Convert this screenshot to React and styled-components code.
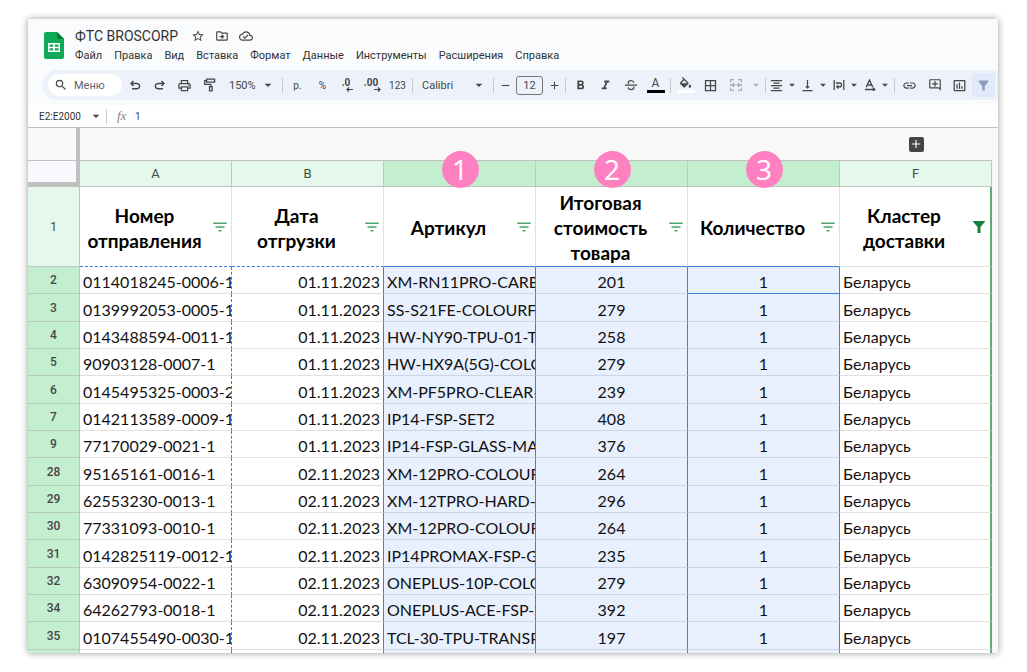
import { useState } from 'react';
import styled, { createGlobalStyle, css } from 'styled-components';
import {
  MdAdd,
  MdArrowDropDown,
  MdBorderAll,
  MdFilterAlt,
  MdFilterList,
  MdFormatAlignCenter,
  MdFormatBold,
  MdFormatItalic,
  MdInsertChartOutlined,
  MdLink,
  MdOutlineAddComment,
  MdOutlineCloudDone,
  MdOutlineDriveFileMove,
  MdOutlinePrint,
  MdRemove,
  MdSearch,
  MdStarBorder,
  MdVerticalAlignBottom,
} from 'react-icons/md';

const menus = ['Файл', 'Правка', 'Вид', 'Вставка', 'Формат', 'Данные', 'Инструменты', 'Расширения', 'Справка'];

const columns = [
  { letter: 'A', title: 'Номер отправления' },
  { letter: 'B', title: 'Дата отгрузки' },
  { letter: 'C', title: 'Артикул', badge: 1 },
  { letter: 'D', title: 'Итоговая стоимость товара', badge: 2 },
  { letter: 'E', title: 'Количество', badge: 3 },
  { letter: 'F', title: 'Кластер доставки', filtered: true },
];

const rows = [
  [2, '0114018245-0006-1', '01.11.2023', 'XM-RN11PRO-CARB', 201],
  [3, '0139992053-0005-1', '01.11.2023', 'SS-S21FE-COLOURFU', 279],
  [4, '0143488594-0011-1', '01.11.2023', 'HW-NY90-TPU-01-TR', 258],
  [5, '90903128-0007-1', '01.11.2023', 'HW-HX9A(5G)-COLO', 279],
  [6, '0145495325-0003-2', '01.11.2023', 'XM-PF5PRO-CLEAR-C', 239],
  [7, '0142113589-0009-1', '01.11.2023', 'IP14-FSP-SET2', 408],
  [9, '77170029-0021-1', '01.11.2023', 'IP14-FSP-GLASS-MAT', 376],
  [28, '95165161-0016-1', '02.11.2023', 'XM-12PRO-COLOUR', 264],
  [29, '62553230-0013-1', '02.11.2023', 'XM-12TPRO-HARD-T', 296],
  [30, '77331093-0010-1', '02.11.2023', 'XM-12PRO-COLOUR', 264],
  [31, '0142825119-0012-1', '02.11.2023', 'IP14PROMAX-FSP-GL', 235],
  [32, '63090954-0022-1', '02.11.2023', 'ONEPLUS-10P-COLO', 279],
  [34, '64262793-0018-1', '02.11.2023', 'ONEPLUS-ACE-FSP-S', 392],
  [35, '0107455490-0030-1', '02.11.2023', 'TCL-30-TPU-TRANSP', 197],
];

const SheetsLogo = () => (
  <svg width="20" height="27" viewBox="0 0 20 27" aria-hidden="true">
    <path d="M2 0h11l7 7v18a2 2 0 0 1-2 2H2a2 2 0 0 1-2-2V2a2 2 0 0 1 2-2z" fill="#0fa958" />
    <path d="M13 0l7 7h-5a2 2 0 0 1-2-2z" fill="#087a3c" />
    <path d="M4 11h12v9H4zM5.5 12.5v2.2h3.7v-2.2zm5.3 0v2.2h3.7v-2.2zm-5.3 3.8v2.2h3.7v-2.2zm5.3 0v2.2h3.7v-2.2z" fill="#fff" fillRule="evenodd" />
  </svg>
);

const UndoIcon = ({ flip }) => (
  <svg width="14" height="14" viewBox="0 0 14 14" fill="none" stroke="currentColor" strokeWidth="1.4" aria-hidden="true">
    <g transform={flip ? 'matrix(-1 0 0 1 14 0)' : undefined}>
      <path d="M5.500 3L3 5.500 5.500 8M3.200 5.500h5.800a2.600 2.600 0 0 1 0 5.200H4" />
    </g>
  </svg>
);

const PaintIcon = () => (
  <svg width="14" height="14" viewBox="0 0 14 14" fill="none" stroke="currentColor" strokeWidth="1.3" aria-hidden="true">
    <path d="M3.600 1.200h8v3h-8zM3.600 2.700H1.700v3.700h6.100v2M6.500 8.600h2.600v4.200H6.500z" />
  </svg>
);

const DecimalIcon = ({ more }) => (
  <DecimalGlyph>
    <span>{more ? '.00' : '.0'}</span>
    <svg width="7" height="5" viewBox="0 0 7 5" fill="none" stroke="currentColor" strokeWidth="1.2" aria-hidden="true">
      <path d={more ? 'M0 2.500h6M4 .5l2 2-2 2' : 'M7 2.500H1M3 .5l-2 2 2 2'} />
    </svg>
  </DecimalGlyph>
);

const StrikeIcon = () => (
  <svg width="14" height="14" viewBox="0 0 14 14" fill="none" stroke="currentColor" strokeWidth="1.3" aria-hidden="true">
    <path d="M1 7.200h12M9.800 4.600C9.500 3.300 8.400 2.600 7 2.600S4.300 3.400 4.300 4.600c0 .5.200.9.500 1.200M4.200 9.400c.2 1.400 1.300 2.200 2.800 2.200s2.900-.8 2.900-2.100c0-.4-.1-.7-.2-1" />
  </svg>
);

const FillIcon = () => (
  <svg width="15" height="15" viewBox="0 0 24 24" fill="currentColor" aria-hidden="true">
    <path d="M16.560 8.940L7.620 0 6.210 1.410l2.380 2.380-5.150 5.150a1.490 1.490 0 0 0 0 2.120l5.500 5.500c.29.29.68.44 1.060.44s.77-.15 1.060-.44l5.500-5.500c.59-.58.59-1.530 0-2.120zM5.210 10L10 5.210 14.790 10zM19 11.500s-2 2.170-2 3.500a2 2 0 0 0 4 0c0-1.330-2-3.500-2-3.500z" />
  </svg>
);

const MergeIcon = () => (
  <svg width="14" height="14" viewBox="0 0 14 14" fill="none" stroke="currentColor" strokeWidth="1.3" aria-hidden="true">
    <path d="M5 1.600H1.600V4.500M9 1.600h3.400V4.500M5 12.400H1.600V9.500M9 12.400h3.400V9.500M1 7h4.500M3.800 5.200L5.600 7 3.800 8.800M13 7H8.500M10.200 5.200L8.400 7l1.800 1.800" />
  </svg>
);

const WrapIcon = () => (
  <svg width="12" height="12" viewBox="0 0 12 12" fill="none" stroke="currentColor" strokeWidth="1.3" aria-hidden="true">
    <path d="M1.200 1v10M10.800 1v10M2.800 4h3.800a1.900 1.900 0 0 1 0 3.800H4M5.500 6.100L3.800 7.800l1.700 1.700" />
  </svg>
);

const RotateIcon = () => (
  <svg width="12" height="12" viewBox="0 0 12 12" fill="none" stroke="currentColor" strokeWidth="1.3" aria-hidden="true">
    <path d="M2.200 8.200L5.500 1l3.300 7.200M3.300 6h4.400M1 10.500h9.500M9 8.700l1.800 1.800L9 12" />
  </svg>
);

const FunnelIcon = () => (
  <svg width="14" height="14" viewBox="0 0 14 14" fill="#188038" aria-hidden="true">
    <path d="M.5 1h13L8.500 7v6h-3V7z" />
  </svg>
);

const Dropdown = ({ label, children }) => (
  <SplitButton type="button" aria-label={label}>
    <IconSlot>{children}</IconSlot>
    <MdArrowDropDown size={14} />
  </SplitButton>
);

export default function App() {
  const [zoom, setZoom] = useState('150%');
  const [font, setFont] = useState('Calibri');
  const [fontSize, setFontSize] = useState('12');
  const [range, setRange] = useState('E2:E2000');
  const [formula, setFormula] = useState('1');

  return (
    <>
      <GlobalStyle />
      <Page>
        <Window>
          <Header>
            <SheetsLogo />
            <div>
              <TitleRow>
                <Title>ФТС BROSCORP</Title>
                <TitleButton type="button" aria-label="Пометить"><MdStarBorder size={14} /></TitleButton>
                <TitleButton type="button" aria-label="Переместить"><MdOutlineDriveFileMove size={14} /></TitleButton>
                <TitleButton type="button" aria-label="Статус документа"><MdOutlineCloudDone size={14} /></TitleButton>
              </TitleRow>
              <MenuBar>
                {menus.map((menu) => (
                  <MenuButton key={menu} type="button">{menu}</MenuButton>
                ))}
              </MenuBar>
            </div>
          </Header>

          <Toolbar>
            <SearchBox>
              <MdSearch size={14} />
              <SearchInput type="text" placeholder="Меню" aria-label="Поиск по меню" />
            </SearchBox>
            <Tool type="button" aria-label="Отменить"><UndoIcon /></Tool>
            <Tool type="button" aria-label="Повторить"><UndoIcon flip /></Tool>
            <Tool type="button" aria-label="Печать"><MdOutlinePrint size={15} /></Tool>
            <Tool type="button" aria-label="Копировать форматирование"><PaintIcon /></Tool>
            <SelectBox $width={58}>
              <Select aria-label="Масштаб" value={zoom} onChange={(e) => setZoom(e.target.value)}>
                <option>100%</option>
                <option>150%</option>
              </Select>
              <MdArrowDropDown size={16} />
            </SelectBox>
            <Separator />
            <Tool type="button" aria-label="Денежный формат">р.</Tool>
            <Tool type="button" aria-label="Процентный формат">%</Tool>
            <Tool type="button" aria-label="Меньше знаков"><DecimalIcon /></Tool>
            <Tool type="button" aria-label="Больше знаков"><DecimalIcon more /></Tool>
            <Tool type="button" aria-label="Другие форматы">123</Tool>
            <Separator />
            <SelectBox $width={76}>
              <Select aria-label="Шрифт" value={font} onChange={(e) => setFont(e.target.value)}>
                <option>Calibri</option>
                <option>Arial</option>
              </Select>
              <MdArrowDropDown size={16} />
            </SelectBox>
            <Separator />
            <Step type="button" aria-label="Уменьшить шрифт"><MdRemove size={13} /></Step>
            <SizeInput aria-label="Размер шрифта" value={fontSize} onChange={(e) => setFontSize(e.target.value)} />
            <Step type="button" aria-label="Увеличить шрифт"><MdAdd size={13} /></Step>
            <Separator />
            <Tool type="button" aria-label="Полужирный"><MdFormatBold size={15} /></Tool>
            <Tool type="button" aria-label="Курсив"><MdFormatItalic size={15} /></Tool>
            <Tool type="button" aria-label="Зачёркнутый"><StrikeIcon /></Tool>
            <Tool type="button" aria-label="Цвет текста"><ColorMark $color="#000">A</ColorMark></Tool>
            <Separator />
            <Tool type="button" aria-label="Цвет заливки">
              <ColorMark $color="#fff"><FillIcon /></ColorMark>
            </Tool>
            <Tool type="button" aria-label="Границы"><MdBorderAll size={15} /></Tool>
            <SplitButton type="button" aria-label="Объединить ячейки" disabled>
              <IconSlot><MergeIcon /></IconSlot>
              <MdArrowDropDown size={14} />
            </SplitButton>
            <Separator />
            <Dropdown label="Выравнивание по горизонтали"><MdFormatAlignCenter size={15} /></Dropdown>
            <Dropdown label="Выравнивание по вертикали"><MdVerticalAlignBottom size={15} /></Dropdown>
            <Dropdown label="Перенос текста"><WrapIcon /></Dropdown>
            <Dropdown label="Поворот текста"><RotateIcon /></Dropdown>
            <Separator />
            <Tool type="button" aria-label="Вставить ссылку"><MdLink size={15} /></Tool>
            <Tool type="button" aria-label="Добавить комментарий"><MdOutlineAddComment size={14} /></Tool>
            <Tool type="button" aria-label="Вставить диаграмму"><MdInsertChartOutlined size={15} /></Tool>
            <Tool type="button" aria-label="Фильтр" $active><MdFilterAlt size={15} /></Tool>
          </Toolbar>

          <FormulaBar>
            <NameInput aria-label="Диапазон" value={range} onChange={(e) => setRange(e.target.value)} />
            <MdArrowDropDown size={16} />
            <Separator />
            <Fx>fx</Fx>
            <FormulaInput aria-label="Формула" value={formula} onChange={(e) => setFormula(e.target.value)} />
          </FormulaBar>

          <Sheet>
            <Table>
              <colgroup>
                <NumberCol />
                {columns.map((col) => <col key={col.letter} />)}
              </colgroup>
              <thead>
                <tr>
                  <GroupCorner />
                  <GroupCell colSpan={5} />
                  <GroupCell>
                    <ExpandButton type="button" aria-label="Развернуть группу"><MdAdd size={14} /></ExpandButton>
                  </GroupCell>
                </tr>
                <tr>
                  <Corner />
                  {columns.map((col) => (
                    <Letter key={col.letter} scope="col" $selected={!!col.badge}>
                      {!col.badge && col.letter}
                      {col.badge && <Badge>{col.badge}</Badge>}
                    </Letter>
                  ))}
                </tr>
              </thead>
              <tbody>
                <tr>
                  <RowNumber scope="row" $first>1</RowNumber>
                  {columns.map((col) => (
                    <Heading key={col.letter} scope="col" $col={col.letter}>
                      <HeadingInner>
                        <HeadingText>{col.title}</HeadingText>
                        <FilterButton type="button" aria-label={`Фильтр: ${col.title}`}>
                          {col.filtered ? <FunnelIcon /> : <MdFilterList size={18} />}
                        </FilterButton>
                      </HeadingInner>
                    </Heading>
                  ))}
                </tr>
                {rows.map(([number, shipment, date, sku, price]) => (
                  <tr key={number}>
                    <RowNumber scope="row">{number}</RowNumber>
                    <Cell $copied>{shipment}</Cell>
                    <Cell $align="right" $edge>{date}</Cell>
                    <Cell $selected>{sku}</Cell>
                    <Cell $selected $align="center">{price}</Cell>
                    <Cell $selected $align="center" $active={number === 2}>1</Cell>
                    <Cell $last>Беларусь</Cell>
                  </tr>
                ))}
                {/* top edge of the next row, cut by the window */}
                <PeekRow aria-hidden="true">
                  <RowNumber />
                  <Cell $copied />
                  <Cell $edge />
                  <Cell $selected />
                  <Cell $selected />
                  <Cell $selected />
                  <Cell $last />
                </PeekRow>
              </tbody>
            </Table>
          </Sheet>
        </Window>
      </Page>
    </>
  );
}

const GlobalStyle = createGlobalStyle`
  * {
    box-sizing: border-box;
  }

  body {
    margin: 0;
    background: #fff;
    color: #444746;
    font-family: Roboto, 'Liberation Sans', sans-serif;
    font-size: 11px;
  }

  button, input, select {
    margin: 0;
    padding: 0;
    border: 0;
    background: none;
    color: inherit;
    font: inherit;
  }

  svg {
    flex: none;
  }
`;

const Page = styled.div`
  display: flex;
  min-height: 100vh;
  padding: 19px 29px 19px 28px;
`;

const Window = styled.main`
  display: flex;
  flex: 1;
  flex-direction: column;
  min-width: 0;
  overflow: hidden;
  background: #f9fbfd;
  box-shadow: 0 0 7px rgba(0, 0, 0, 0.4);
`;

const Header = styled.header`
  display: flex;
  align-items: center;
  gap: 11px;
  height: 51px;
  padding: 2px 16px 0;
`;

const TitleRow = styled.div`
  display: flex;
  align-items: center;
  gap: 10px;
  height: 20px;
`;

const Title = styled.h1`
  margin: 0 3px 0 0;
  font-size: 14px;
  font-weight: 400;
  line-height: 18px;
  color: #333;
`;

const TitleButton = styled.button`
  display: flex;
`;

const MenuBar = styled.nav`
  display: flex;
  gap: 12px;
`;

const MenuButton = styled.button`
  height: 20px;
  color: #333;
`;

const Toolbar = styled.div`
  display: flex;
  align-items: center;
  height: 30px;
  margin-left: 14px;
  padding-left: 6px;
  border-radius: 15px 0 0 15px;
  background: #edf2fa;
`;

const SearchBox = styled.label`
  display: flex;
  align-items: center;
  gap: 6px;
  width: 74px;
  height: 22px;
  padding-left: 6px;
  border-radius: 11px;
  background: #fff;
`;

const SearchInput = styled.input`
  width: 44px;

  &::placeholder {
    color: #5f6368;
    opacity: 1;
  }
`;

const Tool = styled.button`
  display: flex;
  align-items: center;
  justify-content: center;
  width: 25px;
  height: 24px;
  font-size: 10px;

  ${({ $active }) => $active && css`
    width: 23px;
    border-radius: 3px;
    background: #e1eafb;
    color: #8b9bb8;
  `}
`;

const SplitButton = styled.button`
  display: flex;
  align-items: center;
  width: 31px;
  height: 24px;

  &:disabled {
    width: 40px;
    color: #a9adb3;
  }
`;

const IconSlot = styled.span`
  display: flex;
  flex: 1;
  justify-content: center;
`;

const Separator = styled.span`
  width: 1px;
  height: 15px;
  margin: 0 2px;
  background: #c7cbd1;
`;

const SelectBox = styled.span`
  display: grid;
  grid-template-columns: 1fr;
  align-items: center;
  width: ${({ $width }) => $width}px;

  > * {
    grid-area: 1 / 1;
  }

  svg {
    justify-self: end;
    margin-right: 4px;
    pointer-events: none;
  }
`;

const Select = styled.select`
  height: 22px;
  padding-left: 7px;
  appearance: none;
`;

const Step = styled.button`
  display: flex;
  justify-content: center;
  width: 18px;
`;

const SizeInput = styled.input`
  width: 27px;
  height: 19px;
  margin: 0 2px;
  border: 1px solid #747775;
  border-radius: 3px;
  text-align: center;
`;

const ColorMark = styled.span`
  display: flex;
  justify-content: center;
  width: 18px;
  height: 16px;
  border-bottom: 3px solid ${({ $color }) => $color};
  font-size: 12px;
  line-height: 13px;
`;

const DecimalGlyph = styled.span`
  display: flex;
  flex-direction: column;
  align-items: flex-end;
  font-weight: 700;
  line-height: 9px;

  span {
    padding-right: 3px;
  }
`;

const FormulaBar = styled.div`
  display: flex;
  align-items: center;
  height: 23px;
  margin-top: 5px;
  padding-left: 11px;
  border-bottom: 1px solid #c0c0c0;
  background: #fff;
`;

const NameInput = styled.input`
  width: 49px;
  font-size: 10px;
  color: #333;
`;

const Fx = styled.span`
  width: 26px;
  padding-left: 8px;
  font-family: 'Liberation Serif', serif;
  font-size: 13px;
  font-style: italic;
  color: #80868b;
`;

const FormulaInput = styled.input`
  flex: 1;
  min-width: 0;
  font-size: 10px;
`;

const Sheet = styled.div`
  display: flex;
  flex: 1;
  padding-right: 6px;
  background: #f9f8f9;
`;

const Table = styled.table`
  width: 100%;
  border-spacing: 0;
  table-layout: fixed;

  th, td {
    padding: 0;
  }
`;

const NumberCol = styled.col`
  width: 52px;
`;

const GroupCell = styled.td`
  height: 33px;
  border-bottom: 1px solid #c0c0c0;
`;

const GroupCorner = styled(GroupCell)`
  border-right: 4px solid #c0c0c0;
`;

const ExpandButton = styled.button`
  display: flex;
  align-items: center;
  justify-content: center;
  width: 15px;
  height: 15px;
  margin: 0 auto;
  border-radius: 2px;
  background: #444746;
  color: #fff;
`;

const Corner = styled.td`
  height: 26px;
  border-right: 4px solid #c0c0c0;
  border-bottom: 5px solid #c0c0c0;
  background: #f8f9fd;
`;

const Letter = styled.th`
  position: relative;
  height: 26px;
  border-right: 1px solid #c0c7c2;
  border-bottom: 1px solid #c0c7c2;
  background: ${({ $selected }) => ($selected ? '#c4eed0' : '#e6f7eb')};
  font-size: 13px;
  font-weight: 400;
`;

const Badge = styled.span`
  position: absolute;
  top: 50%;
  left: 50%;
  width: 37px;
  height: 37px;
  margin: -23px 0 0 -18px;
  border-radius: 50%;
  background: #ff80c0;
  color: #fff;
  font-family: 'Noto Sans', sans-serif;
  font-size: 28px;
  line-height: 37px;
`;

const RowNumber = styled.th`
  border-right: 1px solid #b7c9bc;
  border-bottom: 1px solid #b7c9bc;
  background: ${({ $first }) => ($first ? '#e6f7eb' : '#c4eed0')};
  font-size: 12px;
  font-weight: ${({ $first }) => ($first ? 400 : 500)};
`;

const Heading = styled.th`
  height: 80px;
  border-right: 1px solid #e0e0e0;
  border-bottom: 1px solid #e0e0e0;
  background: #fff;

  ${({ $col }) => 'AB'.includes($col) && css`
    border-bottom: 1px dashed #3b78e7;
  `}

  ${({ $col }) => 'CDE'.includes($col) && css`
    border-bottom: 1px solid #3b82e0;
  `}

  ${({ $col }) => $col === 'F' && css`
    border-right: 2px solid #5fa877;
  `}
`;

const HeadingInner = styled.div`
  display: flex;
  align-items: center;
`;

const HeadingText = styled.span`
  flex: 1;
  padding: 2px 6px 0;
  color: #000;
  font-family: Lato, 'Noto Sans', sans-serif;
  font-size: 19px;
  font-weight: 700;
  line-height: 25px;
`;

const FilterButton = styled.button`
  display: flex;
  justify-content: center;
  width: 22px;
  color: #4aa66e;
`;

const Cell = styled.td`
  overflow: hidden;
  border-right: 1px solid #e0e0e0;
  border-bottom: 1px solid #e0e0e0;
  background: #fff;
  color: #111;
  font-family: Lato, 'Noto Sans', sans-serif;
  font-size: 16px;
  line-height: 23px;
  text-align: ${({ $align }) => $align || 'left'};
  white-space: nowrap;

  && {
    padding: 3px 3px 0;
  }

  ${({ $copied }) => $copied && css`
    border-right: 1px dashed #3b78e7;
  `}

  ${({ $edge }) => $edge && css`
    border-right: 1px solid #3b82e0;
  `}

  ${({ $selected }) => $selected && css`
    border-right: 1px solid #3b82e0;
    border-bottom-color: #ccd5e4;
    background: #e8effd;
  `}

  ${({ $active }) => $active && css`
    border-bottom-color: #3b82e0;
  `}

  ${({ $last }) => $last && css`
    border-right: 2px solid #5fa877;
  `}
`;

const PeekRow = styled.tr`
  height: 3px;

  &&& > * {
    padding: 0;
    border-bottom: 0;
  }
`;
